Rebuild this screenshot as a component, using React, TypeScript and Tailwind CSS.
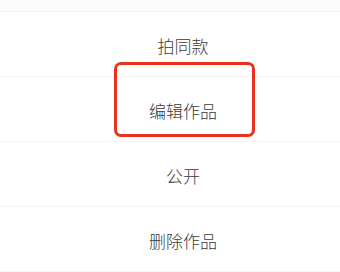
import React from 'react';

const items = ['拍同款', '编辑作品', '公开', '删除作品'];

export default function App() {
  return (
    <div
      className="relative w-[340px] h-[272px] overflow-hidden bg-white"
      style={{ fontFamily: '"Noto Sans CJK SC", "Noto Sans", sans-serif' }}
    >
      {/* top edge of previous row */}
      <div className="h-[12px] bg-[#fcfcfc] border-b border-[#f4f4f4]" />

      <div className="flex flex-col">
        {items.map((label) => (
          <div
            key={label}
            className="h-[65px] flex items-center justify-center pl-[26px] pt-[3px] border-b border-[#f4f4f4] text-[17px] font-light text-[#3a3a3a]"
          >
            {label}
          </div>
        ))}
      </div>

      {/* highlight annotation */}
      <div className="absolute left-[114px] top-[62px] w-[141px] h-[75px] border-[3px] border-[#e8321e] rounded-[7px]" />
    </div>
  );
}
